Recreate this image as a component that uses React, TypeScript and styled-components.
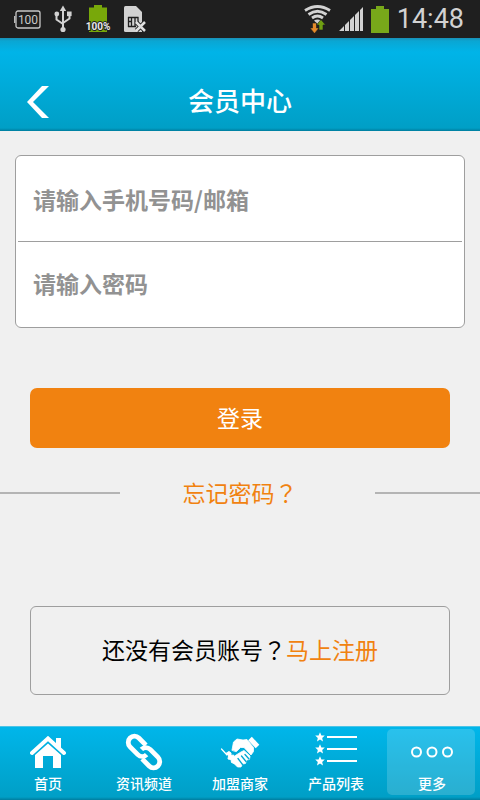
import React from "react";
import styled, { createGlobalStyle } from "styled-components";

const ORANGE = "#f18210";
const LINE = "#9e9e9e";

const GlobalStyle = createGlobalStyle`
  * { box-sizing: border-box; }
  body {
    margin: 0;
    background: #f0f0f0;
    font-family: Roboto, "Noto Sans CJK SC", sans-serif;
    color: #000;
  }
  button, input { font-family: inherit; }
`;

const Page = styled.div`
  display: flex;
  flex-direction: column;
  min-height: 100vh;
`;

const StatusBar = styled.div`
  display: flex;
  align-items: center;
  justify-content: space-between;
  height: 38px;
  padding: 0 16px 0 14px;
  background: #1f1f1f;
  color: #d2d2d2;
`;

const StatusGroup = styled.div<{ $gap: number }>`
  display: flex;
  align-items: center;
  gap: ${(p) => p.$gap}px;
`;

const Clock = styled.time`
  font-size: 27px;
  line-height: 38px;
`;

const Header = styled.header`
  display: grid;
  grid-template-columns: 76px 1fr 76px;
  align-items: end;
  height: 93px;
  padding-bottom: 9px;
  background: linear-gradient(#1a8fb5 0, #0aa6d3 3px, #00b4e8 14px, #009fc6 90px, #007d9e 93px);
  color: #fff;
`;

const BackButton = styled.button`
  display: flex;
  align-items: center;
  justify-content: center;
  height: 40px;
  padding: 0;
  border: 0;
  background: none;
  color: inherit;
`;

const Title = styled.h1`
  margin: 0;
  font-size: 26px;
  font-weight: 500;
  line-height: 40px;
  text-align: center;
`;

const Main = styled.main`
  flex: 1;
  padding-top: 24px;
`;

const Fields = styled.div`
  margin: 0 15px;
  padding: 0 2px;
  border: 1px solid ${LINE};
  border-radius: 6px;
  background: #fff;
`;

const Field = styled.input`
  display: block;
  width: 100%;
  height: 85px;
  padding: 0 15px;
  border: 0;
  background: transparent;
  font-family: "Noto Sans CJK SC", sans-serif;
  font-size: 23px;
  font-weight: 700;
  outline: 0;

  & + & {
    height: 86px;
    padding-bottom: 3px;
    border-top: 1px solid ${LINE};
  }
  &::placeholder {
    color: #929292;
    opacity: 1;
  }
`;

const LoginButton = styled.button`
  display: block;
  width: calc(100% - 60px);
  height: 60px;
  margin: 60px 30px 0;
  padding: 0 0 2px;
  border: 0;
  border-radius: 7px;
  background: ${ORANGE};
  color: #fff;
  font-size: 23px;
`;

const ForgotRow = styled.div`
  display: grid;
  grid-template-columns: 120px 1fr 105px;
  align-items: center;
  height: 34px;
  margin-top: 28px;
  font-size: 23px;
  line-height: 30px;
`;

const Rule = styled.span`
  height: 2px;
  background: #b4b4b4;
`;

const TextLink = styled.a`
  color: ${ORANGE};
  text-decoration: none;
`;

const ForgotLink = styled(TextLink)`
  padding: 4px 15px 0 0;
  text-align: center;
`;

const QuestionMark = styled.span`
  font-family: Roboto, "Noto Sans CJK TC", sans-serif;
`;

const RegisterBox = styled.p`
  height: 89px;
  margin: 96px 30px 31px;
  border: 1px solid ${LINE};
  border-radius: 6px;
  font-size: 23px;
  line-height: 90px;
  text-align: center;
`;

const TabBar = styled.nav`
  display: grid;
  grid-template-columns: repeat(5, 1fr);
  padding: 2px 0 5px;
  border-top: 1px solid #4cc4e6;
  background: linear-gradient(#00b6ea 0, #009fc6 70px, #007d9e 73px);
`;

const Tab = styled.a<{ $active?: boolean }>`
  display: flex;
  flex-direction: column;
  align-items: center;
  margin: 0 5px 0 3px;
  padding: 0 0 2px 2px;
  border-radius: 5px;
  background: ${(p) => (p.$active ? "rgba(255, 255, 255, 0.16)" : "none")};
  color: #fff;
  font-size: 14px;
  font-weight: 500;
  line-height: 18px;
  text-decoration: none;
`;

const TabIcon = styled.span`
  display: flex;
  align-items: center;
  height: 46px;
`;

const SmallBattery = () => (
  <svg width="27" height="19" viewBox="0 0 27 19" fill="none" stroke="#c8c8c8">
    <rect x="2" y="1" width="24" height="17" rx="2" strokeWidth="1.300" />
    <path d="M.7 6v7" strokeWidth="1.200" />
    <text x="14" y="14" textAnchor="middle" fontSize="12" fontFamily="Roboto" fill="#c8c8c8" stroke="none">100</text>
  </svg>
);

const Usb = () => (
  <svg width="18" height="28" viewBox="0 0 18 28" fill="none" stroke="#d2d2d2" strokeWidth="2">
    <path d="M9 4v20M2.500 10v4.500L9 19M15.500 9v4.500L9 18" />
    <path d="M5.800 6L9 .5 12.200 6z" fill="#d2d2d2" stroke="none" />
    <circle cx="9" cy="24.500" r="2.600" fill="#d2d2d2" stroke="none" />
    <circle cx="2.800" cy="9" r="2.400" fill="#d2d2d2" stroke="none" />
    <rect x="13" y="6.500" width="4.600" height="4.600" fill="#d2d2d2" stroke="none" />
  </svg>
);

const FullBattery = () => (
  <svg width="26" height="28" viewBox="0 0 26 28">
    <path d="M4 2.500h5V0h8v2.500h5V27H4z" fill="#78a80a" />
    <text x="13" y="25" textAnchor="middle" fontSize="10" fontWeight="700" fontFamily="Roboto" fill="#e8e8e8" stroke="#1f1f1f" strokeWidth="2" paintOrder="stroke">100%</text>
  </svg>
);

const SimCard = () => (
  <svg width="22" height="27" viewBox="0 0 22 27">
    <path d="M1.500 0H12l6 6v20H1.500Q0 26 0 24.500v-23Q0 0 1.500 0z" fill="#d2d2d2" />
    <path d="M4 11.500h10.500M4 15.500h4M4 20.500h8M4.500 11v10M7.500 11v10M11 11v10M14 11v6" stroke="#1f1f1f" strokeWidth="1.300" />
    <path d="M12.500 16.500l8 8m0-8l-8 8" stroke="#1f1f1f" strokeWidth="4.500" />
    <path d="M12 16l9 9m0-9l-9 9" stroke="#e0e0e0" strokeWidth="2.500" />
  </svg>
);

const Wifi = () => (
  <svg width="27" height="28" viewBox="0 0 27 28" fill="none">
    <g stroke="#d2d2d2" strokeWidth="2.800">
      <path d="M1 5.500Q13.500-2.500 26 5.500" />
      <path d="M4.500 9.500Q13.500 3 22.500 9.500" />
      <path d="M8 13Q13.500 9 19 13" />
    </g>
    <path d="M10 15.500q3.500-2 7 0L13.500 19z" fill="#d2d2d2" />
    <path d="M8.500 18h4v5h2.500l-4.500 5.500L6 23h2.500z" fill="#e48a2a" stroke="#1f1f1f" strokeWidth=".6" />
    <path d="M15 25v-5h-2.500l4.500-5.500 4.500 5.500H19v5z" fill="#6f9f12" stroke="#1f1f1f" strokeWidth=".6" />
  </svg>
);

const Signal = () => (
  <svg width="24" height="24" viewBox="0 0 24 24" fill="#d2d2d2">
    <path d="M0 24l5-5v5zM6 24v-6l4-4V24zM11 24V13l4-4v15zM16 24V8l4-4v20zM21 24V3l3-3v24z" />
  </svg>
);

const PhoneBattery = () => (
  <svg width="18" height="27" viewBox="0 0 18 27">
    <path d="M0 3h5V0h8v3h5v24H0z" fill="#78a81a" />
  </svg>
);

const Chevron = () => (
  <svg width="22" height="32" viewBox="0 0 22 32" fill="#fff">
    <path d="M15 0h7L6 16l16 16h-7L0 16z" />
  </svg>
);

const Home = () => (
  <svg width="36" height="32" viewBox="0 0 36 32" fill="#fff">
    <path d="M26 2h5v11l-5-5z" />
    <path d="M2 17L18 2.500 34 17" fill="none" stroke="#fff" strokeWidth="4" strokeLinecap="round" />
    <path d="M18 7.500l13 11.500v13h-8V20H13v12H5V19z" />
  </svg>
);

const Chain = () => (
  <svg width="38" height="38" viewBox="-19 -19 38 38" fill="none" stroke="#fff" strokeWidth="4.800">
    <g transform="rotate(45)">
      <path d="M-3.500-6.200h-10a6.200 6.200 0 0 0 0 12.400H-2.500a6.200 6.200 0 0 0 6.200-6.200" />
      <path d="M3.500 6.200h10a6.200 6.200 0 0 0 0-12.400H2.500a6.200 6.200 0 0 0-6.200 6.200" />
    </g>
  </svg>
);

const Handshake = () => (
  <svg width="40" height="33" viewBox="0 0 40 33" fill="#fff" stroke="#fff" strokeLinecap="round" strokeLinejoin="round">
    <path d="M1.500 13L7 19" strokeWidth="1.200" />
    <path d="M6.500 17l2.500-1.500L11 17v2.500l2.500-.5 1 2.500-.5 2 3 1-1.500 3.500-4-1.500-.5-3-3-.5.5-3z" strokeWidth="1" />
    <path d="M12 14l1.500-8 3.500-3 6 1 4-.5 6.500 8v4l-2.500 3.500-7-7.500h-3.500l-4 4z" strokeWidth=".8" />
    <path d="M30 2.500l7.500 8" strokeWidth="5" strokeLinecap="butt" />
    <path d="M13.500 24l1-4 6.500-4 3-1.500 6 5.500-.5 3.500-3 .5-1 3.500-3 .5-1.500 3h-3.500l-3.500-3.500z" strokeWidth=".8" />
    <path d="M18 22.500l4.500 6M21.500 20l4.500 5.500M25 18.500l4 4.500" stroke="#00a8d4" strokeWidth="1.300" />
    <path d="M12.500 16.500l3 1.500 5.500-5h3l7.500 7.500" fill="none" stroke="#00a9d6" strokeWidth="1" />
  </svg>
);

const STAR = "M0-4.800L1.400-1.600 4.800-1.400 2.200.9 3 4.500 0 2.600-3 4.500-2.200.9-4.800-1.400-1.400-1.600z";

const StarList = () => (
  <svg width="42" height="40" viewBox="0 0 42 40" fill="#fff">
    {[5, 17, 29].map((y) => (
      <g key={y} transform={`translate(5 ${y})`}>
        <path d={STAR} />
        <rect x="7" y="-1" width="30" height="2" />
      </g>
    ))}
  </svg>
);

const Dots = () => (
  <svg width="42" height="12" viewBox="0 0 42 12" fill="none" stroke="#fff" strokeWidth="2">
    <circle cx="5.500" cy="6" r="4.500" />
    <circle cx="21" cy="6" r="4.500" />
    <circle cx="36.500" cy="6" r="4.500" />
  </svg>
);

const TABS = [
  { label: "首页", Icon: Home },
  { label: "资讯频道", Icon: Chain },
  { label: "加盟商家", Icon: Handshake },
  { label: "产品列表", Icon: StarList },
  { label: "更多", Icon: Dots, active: true },
];

export default function App() {
  return (
    <Page lang="zh-CN">
      <GlobalStyle />
      <StatusBar>
        <StatusGroup $gap={13}>
          <SmallBattery />
          <Usb />
          <FullBattery />
          <SimCard />
        </StatusGroup>
        <StatusGroup $gap={8}>
          <Wifi />
          <Signal />
          <PhoneBattery />
          <Clock>14:48</Clock>
        </StatusGroup>
      </StatusBar>
      <Header>
        <BackButton type="button" aria-label="返回">
          <Chevron />
        </BackButton>
        <Title>会员中心</Title>
      </Header>
      <Main>
        <form onSubmit={(e) => e.preventDefault()}>
          <Fields>
            <Field type="text" aria-label="手机号码/邮箱" placeholder="请输入手机号码/邮箱" />
            <Field type="password" aria-label="密码" placeholder="请输入密码" />
          </Fields>
          <LoginButton type="submit">登录</LoginButton>
        </form>
        <ForgotRow>
          <Rule />
          <ForgotLink href="#forgot">
            忘记密码<QuestionMark lang="zh-TW">？</QuestionMark>
          </ForgotLink>
          <Rule />
        </ForgotRow>
        <RegisterBox>
          还没有会员账号<QuestionMark lang="zh-TW">？</QuestionMark>
          <TextLink href="#register">马上注册</TextLink>
        </RegisterBox>
      </Main>
      <TabBar>
        {TABS.map(({ label, Icon, active }) => (
          <Tab key={label} href="#" $active={active} aria-current={active ? "page" : undefined}>
            <TabIcon>
              <Icon />
            </TabIcon>
            {label}
          </Tab>
        ))}
      </TabBar>
    </Page>
  );
}
